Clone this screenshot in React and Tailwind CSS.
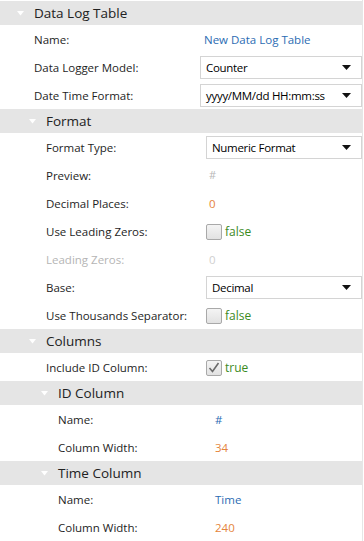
import React from 'react';

const font = { fontFamily: '"Open Sans", "Noto Sans", "Liberation Sans", sans-serif' };

const labelPad = ['pl-[34px] w-[200px]', 'pl-[46px] w-[206px]', 'pl-[58px] w-[212px]'];
const headPad = ['pl-[17px]', 'pl-[29px]', 'pl-[41px]'];

const Header = ({ level, title }) => (
    <div className={`flex h-[24px] items-center bg-[#e5e5e5] ${headPad[level]}`}>
        <svg width="7" height="5" viewBox="0 0 7 5" className="mr-[10px]">
            <path d="M0 0 L7 0 L3.5 4.5 Z" fill="#ffffff" />
        </svg>
        <span className="text-[13.5px] text-[#222]">{title}</span>
    </div>
);

const Row = ({ level, label, disabled, children }) => (
    <div className="flex h-[28px] items-center pt-[1px]">
        <div className={`shrink-0 text-[11.5px] ${labelPad[level]} ${disabled ? 'text-[#b5b5b5]' : 'text-[#1e1e1e]'}`}>
            {label}
        </div>
        <div className="flex flex-1 items-center">{children}</div>
    </div>
);

const Select = ({ value }) => (
    <div className="flex h-[23px] w-full items-center justify-between border border-[#d4d4d4] bg-white pl-[5px] pr-[10px] text-[11.5px] text-black">
        <span className="tracking-[-0.3px]">{value}</span>
        <svg width="9" height="5" viewBox="0 0 9 5" className="shrink-0">
            <path d="M0 0 L9 0 L4.5 5 Z" fill="#111" />
        </svg>
    </div>
);

const Check = ({ checked, text }) => (
    <div className="flex items-center">
        <div className="flex h-[16px] w-[16px] items-center justify-center rounded-[2px] border border-[#a9a9a9] bg-[linear-gradient(#f4f4f4,#e2e2e2)]">
            {checked && (
                <svg width="12" height="11" viewBox="0 0 12 11">
                    <path d="M1.5 6 L4.5 9.5 L10.5 1" fill="none" stroke="#6a6a6a" strokeWidth="1.6" />
                </svg>
            )}
        </div>
        <span className="ml-[3px] text-[12px] text-[#3c8a1e]">{text}</span>
    </div>
);

const Blue = ({ children, className = '' }) => (
    <span className={`text-[11.5px] text-[#2b6cb3] ${className}`}>{children}</span>
);
const Orange = ({ children, className = '' }) => (
    <span className={`text-[11.5px] text-[#e5843c] ${className}`}>{children}</span>
);

export default function App() {
    return (
        <div className="flex h-[541px] w-[364px] bg-white" style={font}>
            <div className="w-[362px] pt-[1px]">
                <Header level={0} title="Data Log Table" />
                <Row level={0} label="Name:">
                    <Blue className="pl-[4px]">New Data Log Table</Blue>
                </Row>
                <Row level={0} label="Data Logger Model:">
                    <Select value="Counter" />
                </Row>
                <Row level={0} label="Date Time Format:">
                    <Select value="yyyy/MM/dd HH:mm:ss" />
                </Row>

                <Header level={1} title="Format" />
                <Row level={1} label="Format Type:">
                    <Select value="Numeric Format" />
                </Row>
                <Row level={1} label="Preview:">
                    <span className="pl-[3px] text-[11px] text-[#b8b8b8]">#</span>
                </Row>
                <Row level={1} label="Decimal Places:">
                    <Orange className="pl-[3px]">0</Orange>
                </Row>
                <Row level={1} label="Use Leading Zeros:">
                    <Check text="false" />
                </Row>
                <Row level={1} label="Leading Zeros:" disabled>
                    <span className="pl-[3px] text-[11.5px] text-[#cfcfcf]">0</span>
                </Row>
                <Row level={1} label="Base:">
                    <Select value="Decimal" />
                </Row>
                <Row level={1} label="Use Thousands Separator:">
                    <Check text="false" />
                </Row>

                <Header level={1} title="Columns" />
                <Row level={1} label="Include ID Column:">
                    <Check checked text="true" />
                </Row>

                <Header level={2} title="ID Column" />
                <Row level={2} label="Name:">
                    <Blue className="pl-[3px]">#</Blue>
                </Row>
                <Row level={2} label="Column Width:">
                    <Orange className="pl-[3px]">34</Orange>
                </Row>

                <Header level={2} title="Time Column" />
                <Row level={2} label="Name:">
                    <Blue className="pl-[3px]">Time</Blue>
                </Row>
                <Row level={2} label="Column Width:">
                    <Orange className="pl-[3px]">240</Orange>
                </Row>
            </div>
            <div className="w-[1px] bg-[#e6e6e6]" />
        </div>
    );
}
